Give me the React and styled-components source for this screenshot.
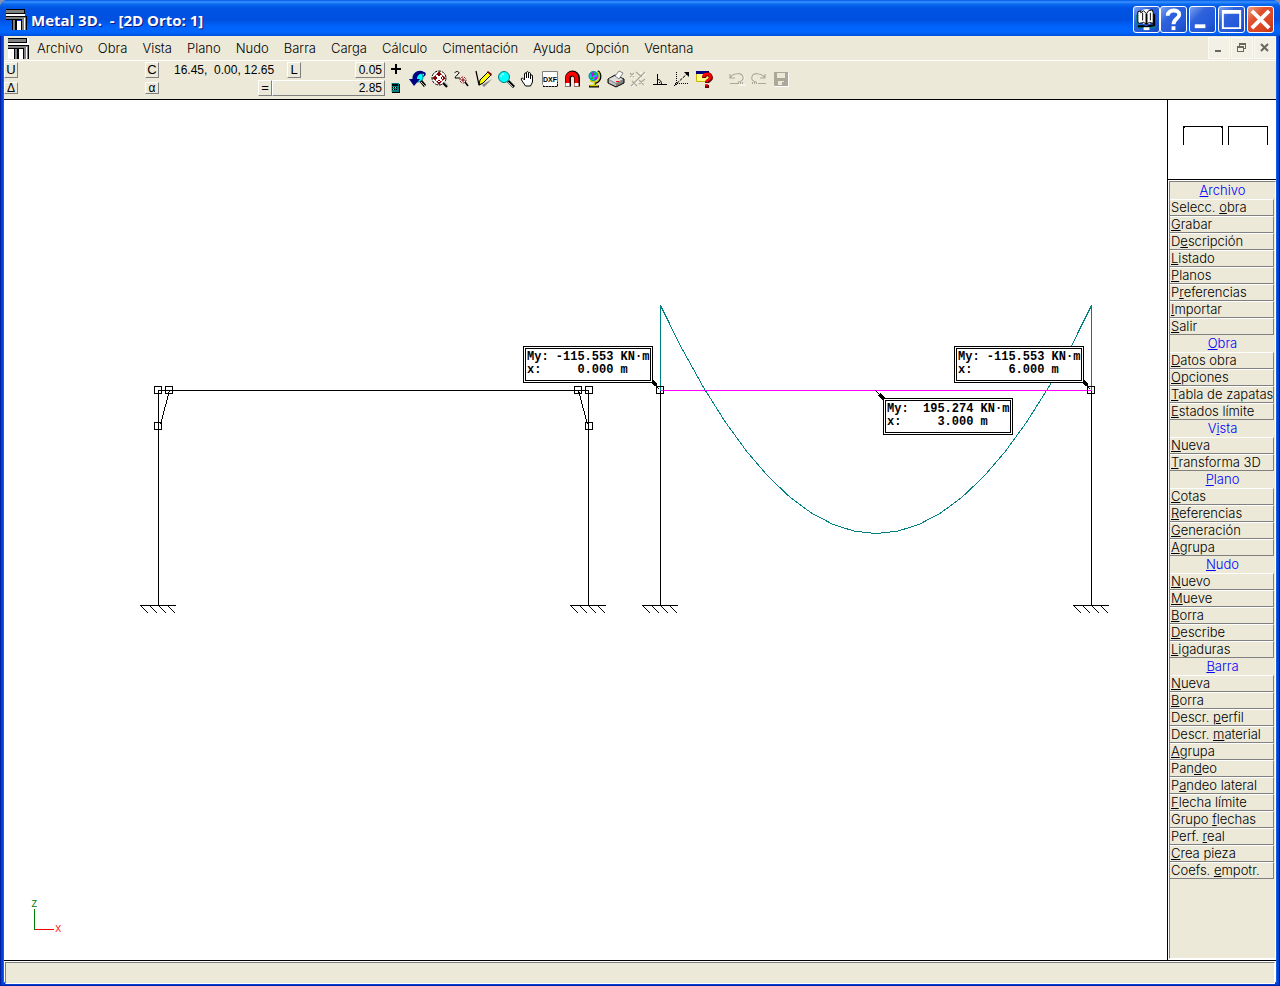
import styled, { createGlobalStyle } from "styled-components";

const menus = ["Archivo", "Obra", "Vista", "Plano", "Nudo", "Barra", "Carga", "Cálculo", "Cimentación", "Ayuda", "Opción", "Ventana"];

// "&" goes before the letter that is underlined
const groups = [
    { title: "&Archivo", items: ["Selecc. &obra", "&Grabar", "D&escripción", "&Listado", "&Planos", "P&referencias", "&Importar", "&Salir"] },
    { title: "&Obra", items: ["&Datos obra", "&Opciones", "&Tabla de zapatas", "&Estados límite"] },
    { title: "V&ista", items: ["&Nueva", "&Transforma 3D"] },
    { title: "&Plano", items: ["&Cotas", "&Referencias", "&Generación", "&Agrupa"] },
    { title: "&Nudo", items: ["&Nuevo", "&Mueve", "&Borra", "&Describe", "&Ligaduras"] },
    { title: "&Barra", items: ["&Nueva", "&Borra", "Descr. &perfil", "Descr. &material", "&Agrupa", "Pan&deo", "P&andeo lateral", "&Flecha límite", "Grupo &flechas", "Perf. &real", "&Crea pieza", "Coefs. &empotr."] },
];

const callouts = [
    { x: 519, y: 246, moment: "-115.553", at: "0.000" },
    { x: 950, y: 246, moment: "-115.553", at: "6.000" },
    { x: 879, y: 298, moment: " 195.274", at: "3.000" },
];

const nodes = [[154, 290], [165, 290], [154, 326], [574, 290], [585, 290], [585, 326], [656, 290], [1087, 290]];
const supports = [154, 584, 656, 1087];

const SEGMENTS = 20;
const momentCurve = Array.from({ length: SEGMENTS + 1 }, (_, i) => {
    const t = i / SEGMENTS;
    return `${656 + 431 * t},${433 - 228 * (2 * t - 1) ** 2}`;
}).join(" ");

export default function App() {
    return (
        <Desktop>
            <GlobalStyle />
            <Window>
                <TitleBar>
                    <BeamIcon />
                    <h1>{"Metal 3D.  - [2D Orto: 1]"}</h1>
                    <WindowButtons />
                </TitleBar>
                <Content>
                    <MenuBar>
                        <BeamIcon boxed />
                        <nav>
                            {menus.map((name) => <MenuButton key={name}>{name}</MenuButton>)}
                        </nav>
                        <ChildButtons />
                    </MenuBar>
                    <ToolBar>
                        <Coordinates />
                        <Tools />
                    </ToolBar>
                    <Main>
                        <Canvas>
                            <Drawing />
                            {callouts.map((c) => (
                                <Callout key={c.x} $x={c.x} $y={c.y}>
                                    {`My: ${c.moment} KN·m\nx:     ${c.at} m`}
                                </Callout>
                            ))}
                            <Axes />
                        </Canvas>
                        <Sidebar />
                    </Main>
                    <StatusBar />
                </Content>
            </Window>
        </Desktop>
    );
}

function Hot({ text }) {
    const [before, after] = text.split("&");
    return <span>{before}<u>{after[0]}</u>{after.slice(1)}</span>;
}

function BeamIcon({ boxed }) {
    return (
        <Beam viewBox="0 0 21 21" $boxed={boxed} shapeRendering="crispEdges" aria-hidden="true">
            {boxed && <path fill="#fff" d="M0 0h21v21H0z" />}
            <path fill="#000" d="M0 0h19v5H0zM0 7h17v4H0zM6 11h5v10H6zM15 7h6v14h-6z" />
            <path fill="#808080" d="M0 1h18v3H0zM0 8h16v2H0zM7 11h2v10H7zM16 8h4v13h-4z" />
            <path fill="#fff" d="M0 5h19v2H0zM11 12h4v9h-4zM18 9h1v12h-1z" />
        </Beam>
    );
}

function WindowButtons() {
    return (
        <TitleButtons>
            <TitleButton aria-label="Manual">
                <svg viewBox="0 0 26 26">
                    <circle cx="13" cy="10" r="8" fill="#fff" />
                    <path fill="#008080" d="M2 8h3v12h6l2 2 3-2h7v2h-7l-3 1-4-1H3z" />
                    <path fill="#fff" stroke="#000" d="M4 5l3-1v2l3-2 3 3 2-3 4-1 1 3v11l-4-1-3 2-3-2-4 1-2-1z" />
                    <path fill="none" stroke="#000" strokeWidth="2" d="M13 7v11M21 7v12l-6 1-2 1-3-1H4" />
                    <path fill="none" stroke="#000" d="M9 6v8M17 6v8" />
                    <path fill="#fff" d="M10 21h6v3h-6z" />
                </svg>
            </TitleButton>
            <TitleButton aria-label="Ayuda">
                <svg viewBox="0 0 26 26">
                    <path fill="none" stroke="#fff" strokeWidth="4" d="M7 9c0-7 12-7 12-1 0 4-6 4-6 10" />
                    <path fill="#fff" d="M11 20h4v4h-4z" />
                </svg>
            </TitleButton>
            <TitleButton $gap aria-label="Minimizar">
                <svg viewBox="0 0 26 26"><path fill="#fff" d="M5 18h11v4H5z" /></svg>
            </TitleButton>
            <TitleButton $gap aria-label="Maximizar">
                <svg viewBox="0 0 26 26"><path fill="#fff" fillRule="evenodd" d="M3 3h20v20H3zM5 7v14h16V7z" /></svg>
            </TitleButton>
            <TitleButton $gap $close aria-label="Cerrar">
                <svg viewBox="0 0 26 26"><path stroke="#fff" strokeWidth="4" d="M4 4l18 18M22 4L4 22" /></svg>
            </TitleButton>
        </TitleButtons>
    );
}

function ChildButtons() {
    return (
        <ChildControls>
            <ChildButton aria-label="Minimizar vista">
                <svg viewBox="0 0 20 20"><path fill="#69685f" d="M6 12h6v2H6z" /></svg>
            </ChildButton>
            <ChildButton aria-label="Restaurar vista">
                <svg viewBox="0 0 20 20" shapeRendering="crispEdges">
                    <path fill="#69685f" d="M7 5h7v6h-2v-1h1V7H8v1H7zM5 8h7v6H5z" />
                    <path fill="#f3f1e6" d="M6 10h5v3H6z" />
                </svg>
            </ChildButton>
            <ChildButton aria-label="Cerrar vista">
                <svg viewBox="0 0 20 20"><path stroke="#69685f" strokeWidth="2" d="M6 6l7 7M13 6l-7 7" /></svg>
            </ChildButton>
        </ChildControls>
    );
}

function Coordinates() {
    return (
        <CoordPanel>
            <CoordRow $columns="141px 29px 113px 68px 30px 20px">
                <KeyButton>U</KeyButton>
                <KeyButton>C</KeyButton>
                <output>{"16.45,  0.00, 12.65"}</output>
                <KeyButton>L</KeyButton>
                <ValueInput aria-label="Incremento" defaultValue="0.05" />
                <IconButton $small aria-label="Añadir">
                    <svg viewBox="0 0 12 12"><path fill="#000" d="M5 0h2v4h4v2H7v4H5V6H1V4h4z" /></svg>
                </IconButton>
            </CoordRow>
            <CoordRow $columns="141px 113px 14px 113px 20px">
                <KeyButton $small>Δ</KeyButton>
                <KeyButton $small>α</KeyButton>
                <KeyButton>=</KeyButton>
                <ValueInput aria-label="Distancia" defaultValue="2.85" />
                <IconButton $small aria-label="Calculadora">
                    <svg viewBox="0 0 12 12" shapeRendering="crispEdges">
                        <path fill="#000" d="M2 2h8v9H2z" />
                        <path fill="#008080" d="M1 1h8v9H1z" />
                        <path fill="#000" d="M2 2h6v2H2zM2 5h1v1H2zM4 5h1v1H4zM6 5h1v1H6zM2 7h1v1H2zM4 7h1v1H4zM6 7h1v1H6z" />
                        <path fill="#0ff" d="M1 1h1v9H1zM3 5h1v1H3zM5 5h1v1H5zM3 7h1v1H3z" />
                    </svg>
                </IconButton>
            </CoordRow>
        </CoordPanel>
    );
}

function Tool({ label, children, ...rest }) {
    return (
        <IconButton aria-label={label} {...rest}>
            <svg viewBox="0 0 18 18">{children}</svg>
        </IconButton>
    );
}

function Tools() {
    return (
        <ToolGroup>
            <Tool label="Zoom previo">
                <circle cx="9" cy="7" r="5" fill="#0ff" stroke="#008080" />
                <path stroke="#000" strokeWidth="3" d="M12 11l4 5" />
                <path stroke="#c0c0c0" d="M12 12l4 4" />
                <path fill="#000080" d="M15 2C10-1 4 2 3.500 9H0l5 7 6-7H8c0-4 3-6 7-5l-1 3c3-1 4-4 1-5z" />
            </Tool>
            <Tool label="Zoom extensión">
                <circle cx="8" cy="8" r="7" fill="#fff" stroke="#000" strokeDasharray="3 1" />
                <path stroke="#c0c0c0" strokeWidth="2" d="M13 12l4 4" />
                <path stroke="#000" strokeWidth="2" d="M12 13l4 4" />
                <path fill="#800000" d="M8 1l3 4H5zM8 15l3-4H5zM1 8l4-3v6zM15 8l-4-3v6zM7 4h2v2H7zM7 10h2v2H7zM4 7h2v2H4zM10 7h2v2h-2z" />
            </Tool>
            <Tool label="Zoom doble">
                <path fill="none" stroke="#000" d="M2 3c0-2 4-2 4 0 0 1-4 3-4 5h5" />
                <circle cx="10" cy="10" r="3" fill="#fff" stroke="#800000" strokeDasharray="2 1" />
                <path stroke="#800000" d="M10 8v4M8 10h4" />
                <path stroke="#000" strokeWidth="1.500" d="M12 12l3 4" />
            </Tool>
            <Tool label="Redibujar">
                <path fill="none" stroke="#000" strokeWidth="1.200" d="M1 1l3 14M4 15l6-4" />
                <path fill="#808080" d="M7 15l10-6-8 8z" />
                <path fill="#ff0" stroke="#000" d="M13 2l3 3-8 8-4 2 1-5z" />
                <path fill="#800000" d="M13 1l4 3-1 2-4-4z" />
            </Tool>
            <Tool label="Zoom ventana">
                <path stroke="#000" strokeWidth="3" d="M11 11l6 6" />
                <path stroke="#c0c0c0" d="M11 12l5 5" />
                <circle cx="7" cy="7" r="5.500" fill="#0ff" stroke="#008080" />
                <path fill="none" stroke="#fff" d="M4 7c0-2 1-3 3-3" />
            </Tool>
            <Tool label="Desplazar">
                <path fill="#fff" stroke="#000" d="M5.500 10V4c0-1.500 2-1.500 2 0v4-5c0-2 2-2 2 0v5-4c0-2 2-2 2 0v5-3c0-1.500 2-1.500 2 0v6l-2 4h-5l-4-6c-1-2 1-3 3 0z" />
            </Tool>
            <Tool label="Plantilla DXF">
                <path fill="#fff" stroke="#808080" d="M1.500 1.500h15v15h-13l-2-2z" />
                <path fill="none" stroke="#000" d="M2 16.500h14.500V12" strokeDasharray="2 1" />
                <DxfText x="9" y="12" textAnchor="middle">DXF</DxfText>
            </Tool>
            <Tool label="Capturas">
                <path fill="none" stroke="#000" strokeWidth="6" d="M5 16.500V8c0-6 9-6 9 0v8.500" />
                <path fill="none" stroke="#f00" strokeWidth="4" d="M4.500 16V8c0-6 9-6 9 0v8" />
                <path fill="#fff" d="M2.500 13h4v3h-4zM11.500 13h4v3h-4z" />
            </Tool>
            <Tool label="Girar vista">
                <path fill="none" stroke="#000" strokeWidth="2" d="M13 1c4 4 3 11-3 12v3M4 16.500h10" />
                <path fill="none" stroke="#cc0" strokeWidth="1.500" d="M13 2c3 4 1 10-4 10l-4-1M9.500 12v3M5 15.500h8" />
                <circle cx="8.500" cy="6" r="4.500" fill="#00c8d8" stroke="#008080" />
                <path fill="#c0f" d="M6 3l3-1 1 3-3 2zM9 8l3-2v3l-2 1z" />
                <path fill="#0c0" d="M9 3h2v2H9zM6 7h2v2H6z" />
            </Tool>
            <Tool label="Imprimir">
                <path fill="#808080" stroke="#000" d="M1 9l7-4 9 4v4l-8 4-8-4z" />
                <path fill="#e0e0e0" d="M1.500 9L8 6l8 3-7 4z" />
                <path fill="#fff" stroke="#808080" d="M8 6l4-5 4 2-4 6z" />
                <path fill="#c0c0c0" d="M2 10l7 4v2l-7-3z" />
                <path fill="#f00" d="M9 11h3v1H9z" />
            </Tool>
            <Tool label="Cotas">
                <path fill="none" stroke="#fff" d="M3 17L17 3M2 4l4 4M6 4L2 8M9 5l4-3M12 11l5 5" />
                <path fill="none" stroke="#aca899" strokeWidth="1.200" d="M2 16L16 2M1 3l4 4M5 3L1 7M7 2l6 5M3 11l5 5M10 10l5 5M10 14l6-5" />
            </Tool>
            <Tool label="Ortogonal">
                <path fill="none" stroke="#000" d="M2 14.500h14M6.500 4v10M6.500 9.500c3 0 4 2 4 5" />
                <path fill="#000" d="M8 12h1v1H8z" />
            </Tool>
            <Tool label="Referencia a objetos">
                <path fill="none" stroke="#000" d="M3.500 2v14M2 13.500h14" strokeDasharray="1 1" />
                <path fill="none" stroke="#000" strokeDasharray="3 1" d="M1 16L15 3" />
                <path fill="#000" d="M11 2h5v5z" />
            </Tool>
            <Tool label="Ayuda en pantalla">
                <path fill="#ff8" stroke="#c8b400" d="M1.500 2.500h12v9h-12z" />
                <path fill="#000080" d="M1 1h13v3H1z" />
                <path fill="none" stroke="#600000" strokeWidth="4" d="M9 8c0-5 7-5 7 0 0 3-4 2-4 5M12 15v3" />
                <path fill="none" stroke="#f00" strokeWidth="2.500" d="M8.500 7c0-4 7-4 7 0 0 3-4 2-4 5M11.500 14v2.500" />
            </Tool>
            <Tool label="Deshacer" $gap disabled>
                <path fill="none" stroke="#fff" d="M3 8c3-5 12-6 13-1 1 3-2 5-5 5M11 15h6v1" />
                <path fill="none" stroke="#aca899" strokeWidth="1.200" d="M2 4v4h5M2 8c3-5 12-6 13-1 1 3-2 5-5 5M2 13.500h8" />
                <path stroke="#aca899" strokeWidth="2" strokeDasharray="1 1" d="M10 13h6" />
            </Tool>
            <Tool label="Rehacer" disabled>
                <path fill="none" stroke="#fff" d="M16 8C13 3 4 2 3 7c-1 3 2 5 5 5" />
                <path fill="none" stroke="#aca899" strokeWidth="1.200" d="M15 4v4h-5M15 8C12 3 3 2 2 7c-1 3 2 5 5 5M8 13.500h8" />
                <path stroke="#aca899" strokeWidth="2" strokeDasharray="1 1" d="M2 13h6" />
            </Tool>
            <Tool label="Guardar" disabled>
                <path fill="#fff" d="M3 3h14v14H3z" />
                <path fill="#aca899" d="M2 2h14v14H3l-1-1z" />
                <path fill="#ece9d8" d="M5 3h8v5H5zM6 11h6v4H6z" />
                <path fill="#aca899" d="M10 12h2v3h-2z" />
            </Tool>
        </ToolGroup>
    );
}

function Drawing() {
    return (
        <DrawingSvg shapeRendering="crispEdges" role="img" aria-label="Pórticos con ley de momentos">
            <g transform="translate(0.500 0.500)" fill="none" stroke="#000">
                <path d="M154 505V290H584V505M165 290L156 324M574 290L583 324M656 290V505M1087 290V505" />
                {supports.map((x) => (
                    <path key={x} d={`M${x - 18} 505h35m-35 0l8 8m1 -8l8 8m1 -8l8 8m1 -8l8 8`} />
                ))}
                <path stroke="#008080" d="M656 290V205M1087 290V205" />
                <polyline stroke="#008080" points={momentCurve} />
                <path stroke="#f0f" d="M656 290H1087" />
                {nodes.map(([x, y]) => <rect key={`${x}-${y}`} x={x - 4} y={y - 4} width="7" height="7" />)}
                <path d="M648 281L655 289M1079 281L1086 289M871 290L879 298" />
                <path strokeWidth="3" d="M648 281L652 285M1079 281L1083 285M875 294L880 299" />
            </g>
        </DrawingSvg>
    );
}

function Axes() {
    return (
        <AxesSvg viewBox="0 0 44 44" aria-label="Ejes x, z">
            <path fill="none" stroke="#f00" d="M8 34.500H28" />
            <path fill="none" stroke="#008000" d="M8.500 14V35" />
            <text x="5" y="12" fill="#008000">z</text>
            <text x="29" y="37" fill="#f00">x</text>
        </AxesSvg>
    );
}

function Sidebar() {
    return (
        <SideColumn>
            <Preview>
                <svg viewBox="0 0 108 79" shapeRendering="crispEdges" aria-hidden="true">
                    <path fill="none" stroke="#000" d="M15.500 45V26.500H54.500V45M60.500 45V26.500H99.500V45M16 27.500h1M53 27.500h1" />
                </svg>
            </Preview>
            <SidePanel>
                {groups.map((group) => (
                    <section key={group.title}>
                        <GroupTitle><Hot text={group.title} /></GroupTitle>
                        {group.items.map((item) => <SideButton key={item}><Hot text={item} /></SideButton>)}
                    </section>
                ))}
            </SidePanel>
        </SideColumn>
    );
}

const GlobalStyle = createGlobalStyle`
    * {
        box-sizing: border-box;
    }

    body {
        margin: 0;
        font-family: Inter, "Liberation Sans", sans-serif;
        font-size: 13px;
        font-weight: 300;
        color: #000;
    }

    button, input {
        font: inherit;
        color: inherit;
        margin: 0;
        padding: 0;
        border: none;
        border-radius: 0;
        background: none;
    }

    svg {
        display: block;
    }
`;

const Desktop = styled.div`
    min-height: 100vh;
    display: flex;
    background-color: #8391b5;
`;

const Window = styled.div`
    flex: 1;
    min-width: 0;
    display: flex;
    flex-direction: column;
    overflow: hidden;
    border-radius: 8px 8px 0 0;
    background-color: #0046dc;
`;

const TitleBar = styled.header`
    height: 36px;
    flex: none;
    display: flex;
    align-items: center;
    position: relative;
    z-index: 1;
    padding: 3px 6px 0;
    background: linear-gradient(#0058e6 0, #3a93ff 2px, #0a6af0 4px, #0054e3 8px, #0050e0 20px, #0062fa 26px, #0066ff 32px, #0050dc 36px);

    h1 {
        flex: 1;
        margin: 0;
        padding: 1px 0 0 4px;
        font-family: "Open Sans", "Noto Sans", sans-serif;
        font-size: 15px;
        font-weight: 700;
        line-height: 20px;
        white-space: pre;
        color: #fff;
        text-shadow: 1px 1px #0a1883;
    }
`;

const Beam = styled.svg`
    width: 21px;
    height: ${(props) => (props.$boxed ? 22 : 21)}px;
    flex: none;
`;

const TitleButtons = styled.div`
    display: flex;
`;

const TitleButton = styled.button`
    width: 27px;
    height: 27px;
    margin-left: ${(props) => (props.$gap ? 2 : 0)}px;
    border: 1px solid #fff;
    border-radius: 3px;
    background: ${(props) => props.$close
        ? "linear-gradient(135deg, #f0a088, #e0512e 35%, #d84420 75%, #b83414)"
        : "linear-gradient(135deg, #7ba2f0, #2f62dc 35%, #2158d8 75%, #1846b8)"};
`;

const Content = styled.div`
    flex: 1;
    min-height: 0;
    display: flex;
    flex-direction: column;
    margin: 0 4px 4px;
    background-color: #ece9d8;
    box-shadow: 0 0 0 1px #1660e8, 0 0 0 3px #0040d8, 0 0 0 4px #001ea0;
`;

const MenuBar = styled.div`
    height: 25px;
    flex: none;
    display: flex;
    align-items: center;
    padding-left: 4px;
    border-bottom: 1px solid #fff;

    nav {
        flex: 1;
        display: flex;
        gap: 15px;
        padding-left: 8px;
    }
`;

const MenuButton = styled.button`
    line-height: 20px;
`;

const ChildControls = styled.div`
    display: flex;
    gap: 1px;
`;

const ChildButton = styled.button`
    width: 22px;
    height: 22px;
    border: 1px solid #fbfaf4;
    background-color: #f3f1e6;
`;

const ToolBar = styled.div`
    height: 39px;
    flex: none;
    display: flex;
    border-bottom: 1px solid #000;
`;

const CoordPanel = styled.div`
    width: 403px;
    flex: none;
    font-family: "Liberation Sans", sans-serif;
    font-size: 12px;
`;

const CoordRow = styled.div`
    height: 18px;
    display: grid;
    grid-template-columns: ${(props) => props.$columns};
    align-items: center;

    output {
        white-space: pre;
    }
`;

const KeyButton = styled.button`
    width: 14px;
    height: ${(props) => (props.$small ? 12 : 16)}px;
    font-size: ${(props) => (props.$small ? 12 : 13)}px;
    line-height: ${(props) => (props.$small ? 10 : 14)}px;
    border-style: solid;
    border-width: 1px;
    border-color: #fff #808080 #808080 #fff;
`;

const ValueInput = styled.input`
    width: 100%;
    height: 16px;
    padding-right: 2px;
    text-align: right;
    border-style: solid;
    border-width: 1px;
    border-color: #fff #808080 #808080 #fff;
`;

const IconButton = styled.button`
    width: ${(props) => (props.$small ? 12 : 22)}px;
    height: ${(props) => (props.$small ? 12 : 22)}px;
    margin-left: ${(props) => (props.$gap ? 11 : props.$small ? 5 : 0)}px;
    display: flex;
    align-items: center;
    justify-content: center;

    svg {
        width: ${(props) => (props.$small ? 12 : 18)}px;
        height: ${(props) => (props.$small ? 12 : 18)}px;
    }
`;

const ToolGroup = styled.div`
    display: flex;
    align-items: center;
    padding-bottom: 2px;
`;

const DxfText = styled.text`
    font-family: "Liberation Sans", sans-serif;
    font-size: 7px;
    font-weight: 700;
`;

const Main = styled.main`
    flex: 1;
    min-height: 0;
    display: flex;
`;

const Canvas = styled.div`
    flex: 1;
    min-width: 0;
    position: relative;
    overflow: hidden;
    background-color: #fff;
`;

const DrawingSvg = styled.svg`
    width: 100%;
    height: 100%;
    position: absolute;
`;

const Callout = styled.pre`
    position: absolute;
    left: ${(props) => props.$x}px;
    top: ${(props) => props.$y}px;
    width: 130px;
    height: 37px;
    margin: 0;
    padding: 2px 1px;
    border: 3px double #000;
    background-color: #fff;
    font-family: "Liberation Mono", monospace;
    font-size: 12px;
    font-weight: 700;
    line-height: 13px;
`;

const AxesSvg = styled.svg`
    position: absolute;
    left: 26px;
    bottom: 21px;
    width: 44px;
    height: 44px;
    margin-left: -4px;
    font-size: 12px;
`;

const SideColumn = styled.aside`
    width: 109px;
    flex: none;
    display: flex;
    flex-direction: column;
    border-left: 1px solid #000;
    background-color: #fff;
`;

const Preview = styled.div`
    height: 80px;
    flex: none;
    border-bottom: 1px solid #000;
`;

const SidePanel = styled.div`
    flex: 1;
    margin: 1px 0 1px 1px;
    border-style: solid;
    border-width: 1px;
    border-color: #808080 #fff #fff #808080;
    background-color: #ece9d8;
    overflow: hidden;
`;

const GroupTitle = styled.h2`
    height: 17px;
    margin: 0;
    font-size: 13px;
    font-weight: 300;
    line-height: 17px;
    text-align: center;
    color: #00f;
`;

const SideButton = styled.button`
    display: block;
    width: 104px;
    height: 17px;
    padding-left: 1px;
    overflow: hidden;
    border-style: solid;
    border-width: 1px 1px 1px 0;
    border-color: #fff #808080 #808080;
    line-height: 15px;
    text-align: left;
    white-space: nowrap;
`;

const StatusBar = styled.footer`
    height: 22px;
    flex: none;
    border-top: 1px solid #000;
    background-color: #fff;

    &::after {
        content: "";
        display: block;
        height: 20px;
        margin: 1px 1px 0;
        border-style: solid;
        border-width: 1px;
        border-color: #808080 #fff #fff #808080;
        background-color: #ece9d8;
    }
`;
